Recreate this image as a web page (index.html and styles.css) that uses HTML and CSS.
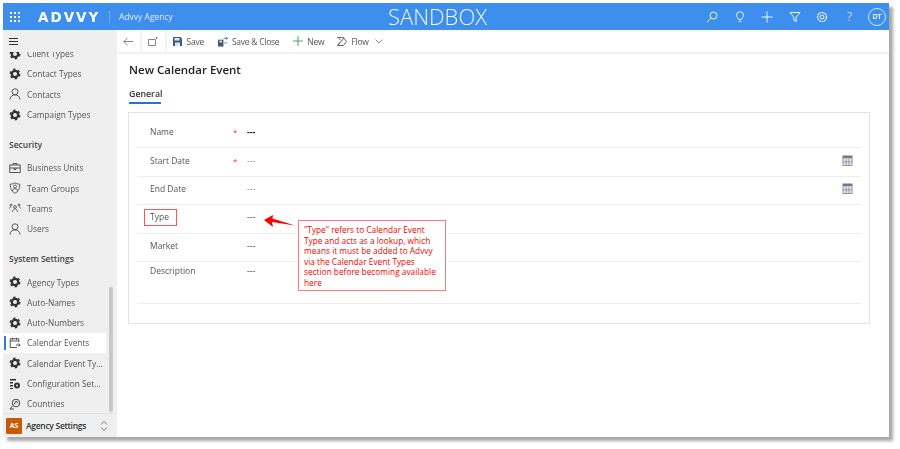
FILE: index.html
```html
<!DOCTYPE html>
<html lang="en">
<head>
<meta charset="utf-8">
<title>New Calendar Event</title>
<link rel="stylesheet" href="styles.css">
</head>
<body>
<svg class="defs" width="0" height="0" aria-hidden="true">
  <symbol id="gear" viewBox="0 0 12 12"><g fill="none" stroke="#333"><circle cx="6" cy="6" r="3.200" stroke-width="2.300"/><circle cx="6" cy="6" r="4.700" stroke-width="1.500" stroke-dasharray="2.400 2.520"/></g></symbol>
  <symbol id="person" viewBox="0 0 12 12"><g fill="none" stroke="#444" stroke-width=".9"><circle cx="6" cy="3.800" r="3"/><path d="M1 11.500c.3-3 2.300-4.700 5-4.700s4.700 1.700 5 4.700"/></g></symbol>
  <symbol id="cal" viewBox="0 0 12 12"><rect x="1" y="1" width="10" height="10.500" fill="#dfe6f2" stroke="#85858c" stroke-width=".9"/><rect x="1" y="1" width="10" height="2.500" fill="#77777f"/><path fill="none" stroke="#85858c" stroke-width=".8" d="M4.500 4v7M7.500 4v7M1 7.500h10"/></symbol>
</svg>
<div class="window">
  <header class="topbar">
    <svg class="waffle" width="10" height="10" viewBox="0 0 10 10"><g fill="#fff"><rect x="0" y="0" width="2" height="2"/><rect x="4" y="0" width="2" height="2"/><rect x="8" y="0" width="2" height="2"/><rect x="0" y="4" width="2" height="2"/><rect x="4" y="4" width="2" height="2"/><rect x="8" y="4" width="2" height="2"/><rect x="0" y="8" width="2" height="2"/><rect x="4" y="8" width="2" height="2"/><rect x="8" y="8" width="2" height="2"/></g></svg>
    <span class="logo">ADVVY</span>
    <span class="agency">Advvy Agency</span>
    <span class="sandbox">SANDBOX</span>
    <div class="top-icons">
      <svg width="12" height="12" viewBox="0 0 12 12"><g fill="none" stroke="#fff" stroke-width=".9"><circle cx="7.500" cy="4.500" r="3.500"/><path d="M5 7 1 11"/></g></svg>
      <svg width="12" height="12" viewBox="0 0 12 12"><g fill="none" stroke="#fff" stroke-width=".9"><path d="M4.500 8.500C4.300 7 2.500 6.300 2.500 4.200a3.500 3.500 0 0 1 7 0c0 2.100-1.800 2.800-2 4.300z"/><path d="M4.800 10.500h2.400"/></g></svg>
      <svg width="12" height="12" viewBox="0 0 12 12"><path fill="none" stroke="#fff" stroke-width=".9" d="M6 .5v11M.5 6h11"/></svg>
      <svg width="12" height="12" viewBox="0 0 12 12"><path fill="none" stroke="#fff" stroke-width=".9" d="M1 1.500h10L7.200 6.200v4.300L4.800 9V6.200z"/></svg>
      <svg width="12" height="12" viewBox="0 0 12 12"><g fill="none" stroke="#fff"><circle cx="6" cy="6" r="4.500" stroke-width="1.200" stroke-dasharray="2 .6"/><circle cx="6" cy="6" r="2" stroke-width=".9"/></g></svg>
      <span class="help">?</span>
      <span class="avatar">DT</span>
    </div>
  </header>
  <div class="body">
    <nav class="sidebar">
      <div class="burger"><svg width="9" height="7" viewBox="0 0 9 7"><path stroke="#333" stroke-width="1" d="M0 .5h9M0 3.500h9M0 6.500h9"/></svg></div>
      <div class="nav-scroll">
        <div class="nav-list">
          <a class="nav-item"><svg class="ni"><use href="#gear"/></svg>Client Types</a>
          <a class="nav-item"><svg class="ni"><use href="#gear"/></svg>Contact Types</a>
          <a class="nav-item"><svg class="ni"><use href="#person"/></svg>Contacts</a>
          <a class="nav-item"><svg class="ni"><use href="#gear"/></svg>Campaign Types</a>
          <div class="nav-head">Security</div>
          <a class="nav-item"><svg class="ni" viewBox="0 0 12 12"><g fill="none" stroke="#444" stroke-width=".9"><rect x=".8" y="3" width="10.400" height="7.500"/><path d="M4 3V1.500h4V3M.8 6h10.400M5 6v1.500h2V6"/></g></svg>Business Units</a>
          <a class="nav-item"><svg class="ni" viewBox="0 0 12 12"><g fill="none" stroke="#444" stroke-width=".8"><path d="M6 .8c1.500 1 3 1.300 4.800 1.300 0 4.700-1.500 7.600-4.800 9.200C2.700 9.700 1.200 6.800 1.200 2.100 3 2.100 4.500 1.800 6 .8z"/><circle cx="6" cy="4.500" r="1.500"/><path d="M3.500 9c.2-1.600 1.200-2.500 2.500-2.500S8.300 7.400 8.500 9"/></g></svg>Team Groups</a>
          <a class="nav-item"><svg class="ni" viewBox="0 0 12 12"><g fill="none" stroke="#444" stroke-width=".8"><circle cx="6" cy="5" r="1.400"/><circle cx="2" cy="3" r="1"/><circle cx="10" cy="3" r="1"/><path d="M3.500 10c.2-2 1.200-3.200 2.500-3.200S8.300 8 8.500 10M.5 6.500C.8 5.300 1.300 4.800 2 4.800M11.500 6.500c-.3-1.200-.8-1.700-1.500-1.700"/></g></svg>Teams</a>
          <a class="nav-item"><svg class="ni"><use href="#person"/></svg>Users</a>
          <div class="nav-head">System Settings</div>
          <a class="nav-item"><svg class="ni"><use href="#gear"/></svg>Agency Types</a>
          <a class="nav-item"><svg class="ni"><use href="#gear"/></svg>Auto-Names</a>
          <a class="nav-item"><svg class="ni"><use href="#gear"/></svg>Auto-Numbers</a>
          <a class="nav-item active"><svg class="ni" viewBox="0 0 12 12"><g fill="none" stroke="#444" stroke-width=".9"><path d="M8 10.500H1.200V1.800h8.600V5M1.200 4h8.600M3.500 .8v2M7.500 .8v2"/><path d="M7 8h4M9.500 6.300 11.200 8 9.500 9.700"/></g></svg>Calendar Events</a>
          <a class="nav-item"><svg class="ni"><use href="#gear"/></svg>Calendar Event Ty...</a>
          <a class="nav-item"><svg class="ni" viewBox="0 0 12 12"><g fill="#333"><path d="M1 1h6v1.500H1zM1 4h3v1.500H1zM1 7h3v1.500H1zM1 10h3v1H1z"/><circle cx="8" cy="7.500" r="3"/></g><circle cx="8" cy="7.500" r="1" fill="#eee"/></svg>Configuration Set...</a>
          <a class="nav-item"><svg class="ni" viewBox="0 0 12 12"><g fill="none" stroke="#333" stroke-width=".9"><circle cx="7" cy="5" r="3.800"/><path d="M5 6.500 7 3l2 2.500M3.500 8 1 11h4"/></g></svg>Countries</a>
        </div>
        <div class="scrollbar"></div>
      </div>
      <div class="area">
        <span class="area-badge">AS</span>
        <span class="area-name">Agency Settings</span>
        <svg width="8" height="12" viewBox="0 0 8 12"><path fill="none" stroke="#555" stroke-width=".8" d="M1 4.500 4 1.500l3 3M1 7.500l3 3 3-3"/></svg>
      </div>
    </nav>
    <main class="content">
      <div class="toolbar">
        <button class="tb tb-nav"><svg width="10" height="9" viewBox="0 0 10 9"><path fill="none" stroke="#666" stroke-width=".8" d="M10 4.500H.8M4.500.8.800 4.500l3.700 3.700"/></svg></button>
        <button class="tb tb-nav tb-win"><svg width="10" height="9" viewBox="0 0 10 9"><path fill="none" stroke="#666" stroke-width=".8" d="M7.500 2.500H.5v6h7zM8.500 0v2M8 .5l1.500 0"/></svg></button>
        <button class="tb tb-save"><svg width="9" height="9" viewBox="0 0 9 9"><path fill="#3c5a7d" d="M0 0h7.500L9 1.500V9H0z"/><path fill="#dfe6ee" d="M1.500 1h5v2.500h-5zM2 5.500h5V9H2z"/></svg>Save</button>
        <button class="tb tb-sc"><svg width="10" height="11" viewBox="0 0 11 11"><path fill="#44566b" d="M0 3.500h6V11H0z"/><path fill="#dfe6ee" d="M1.500 4.500h3v2h-3z"/><path fill="none" stroke="#3b7cc9" stroke-width="1" d="M6 2h4.500M8.500.5l2 1.500-2 1.500M10 7H7"/></svg>Save &amp; Close</button>
        <button class="tb tb-new"><svg width="10" height="10" viewBox="0 0 10 10"><path fill="none" stroke="#3a9a52" stroke-width=".9" d="M5 0v10M0 5h10"/></svg>New</button>
        <button class="tb tb-flow"><svg width="10" height="9" viewBox="0 0 10 9"><path fill="none" stroke="#444" stroke-width=".8" d="M.5.500h6L9.500 4.500 6.500 8.500H.5L7 1M.5 8.500 3 5.500M1 .5l3 3"/></svg>Flow</button>
        <svg class="chev" width="8" height="5" viewBox="0 0 8 5"><path fill="none" stroke="#777" stroke-width=".8" d="M.5.500 4 4 7.500.5"/></svg>
      </div>
      <h1 class="title">New Calendar Event</h1>
      <div class="tabs"><span class="tab">General</span></div>
      <section class="card">
        <div class="row row-name"><span class="label">Name</span><span class="req">*</span><span class="val strong">---</span></div>
        <div class="row row-start"><span class="label">Start Date</span><span class="req">*</span><span class="val muted">---</span><svg class="calicon"><use href="#cal"/></svg></div>
        <div class="row row-end"><span class="label">End Date</span><span class="req"></span><span class="val muted">---</span><svg class="calicon"><use href="#cal"/></svg></div>
        <div class="row row-type"><span class="label">Type</span><span class="req"></span><span class="val">---</span></div>
        <div class="row row-market"><span class="label">Market</span><span class="req"></span><span class="val">---</span></div>
        <div class="row row-desc"><span class="label">Description</span><span class="req"></span><span class="val">---</span></div>
        <div class="type-box"></div>
        <svg class="arrow" width="34" height="14" viewBox="0 0 34 14"><path fill="#f00" d="M1 5 10 0 9.500 3.500 32 10.500 9 7 10 12z"/></svg>
        <div class="note">"Type" refers to Calendar Event Type and acts as a lookup, which means it must be added to Advvy via the Calendar Event Types section before becoming available here</div>
      </section>
    </main>
  </div>
</div>
</body>
</html>
```
FILE: styles.css
```css
* { box-sizing: border-box; }
html, body { margin: 0; height: 100%; background: #fff; overflow: hidden; }
body { font-family: "Open Sans", "Noto Sans", "Liberation Sans", sans-serif; font-size: 8.5px; color: #444; }
.defs { position: absolute; }

.window {
  width: 886px; height: 434px; margin: 3px 0 0 3px;
  display: flex; flex-direction: column;
  background: #fff;
  box-shadow: 4px 4px 3px #a8a8a8;
  filter: blur(.3px);
}

.topbar {
  height: 27px; flex: none; display: flex; align-items: center;
  background: #3e8eed; color: #fff; position: relative;
}
.waffle { margin-left: 7px; flex: none; }
.logo {
  margin-left: 18px; width: 72px; height: 12px;
  font: 700 13.5px/12px "DejaVu Sans", sans-serif;
  letter-spacing: 2px; border-right: 1px solid #76aef2;
}
.agency { margin-left: 9px; font-size: 8.5px; color: #e4f0fd; }
.sandbox {
  position: absolute; left: 385px; top: 0; line-height: 27px;
  font-size: 22px; font-weight: 300; color: #f4f8fe;
}
.top-icons { margin-left: auto; display: flex; align-items: center; gap: 15.500px; padding-right: 3px; }
.top-icons svg { flex: none; }
.help { width: 12px; text-align: center; font-size: 12px; line-height: 12px; font-weight: 300; }
.avatar {
  width: 18px; height: 18px; border: 1px solid #d5e6fb; border-radius: 50%;
  font-size: 7px; font-weight: 600; line-height: 16px; text-align: center; margin-left: -3px;
}

.body { flex: 1; min-height: 0; display: flex; }

.sidebar { width: 114px; flex: none; display: flex; flex-direction: column; background: #efefef; }
.burger { height: 22px; flex: none; display: flex; align-items: center; padding: 1px 0 0 6px; }
.nav-scroll { flex: 1; min-height: 0; overflow: hidden; position: relative; }
.nav-list { margin-top: -8.500px; width: 103px; }
.nav-item {
  height: 20.300px; display: flex; align-items: center; padding-left: 6px;
  font-size: 8.300px; color: #555; white-space: nowrap; position: relative;
}
.ni { width: 12px; height: 12px; margin-right: 6px; flex: none; }
.nav-head { height: 33px; padding: 13.500px 0 0 6px; font-size: 8.500px; font-weight: 600; line-height: 14px; color: #444; }
.nav-item.active { background: #fff; }
.nav-item.active::before {
  content: ""; position: absolute; left: 1px; top: 3px; width: 2px; height: 14px; background: #2b7de0;
}
.scrollbar { position: absolute; left: 106px; top: 235px; width: 4px; height: 125px; background: #c8c8c8; border-radius: 2px; }
.area {
  height: 24px; flex: none; display: flex; align-items: center; padding-left: 3px;
  border-top: 1px solid #e2e2e2;
}
.area-badge {
  width: 16px; height: 16px; background: #c85a06; color: #fff; border-radius: 1px;
  font-size: 7px; font-weight: 700; line-height: 16px; text-align: center; flex: none;
}
.area-name { margin-left: 4px; width: 74px; font-size: 8.500px; letter-spacing: -.3px; font-weight: 600; color: #333; }

.content { flex: 1; min-width: 0; display: flex; flex-direction: column; }
.toolbar {
  height: 24px; flex: none; display: flex; align-items: center;
  border-bottom: 2px solid #f1f1f1;
}
.tb {
  height: 22px; border: 0; background: none; padding: 0; display: flex; align-items: center; gap: 4px;
  font: 8.500px "Open Sans", "Noto Sans", sans-serif; letter-spacing: -.25px; color: #555;
}
.tb-nav { width: 24.500px; justify-content: center; border-right: 2px solid #f3f3f3; }
.tb-win { width: 25px; }
.tb-save { margin-left: 6px; gap: 5px; }
.tb-sc { margin-left: 14px; }
.tb-new { margin-left: 14px; }
.tb-flow { margin-left: 13px; }
.chev { margin-left: 6px; }

.title { margin: 8px 0 0 12px; font-size: 11.500px; font-weight: 600; line-height: 16px; color: #222; }
.tabs { margin: 10px 0 0 12px; height: 16px; }
.tab {
  display: block; height: 16px; font-size: 8.800px; font-weight: 600; line-height: 13px; color: #333;
  border-bottom: 2px solid #2b6fd0; width: 32px;
}
.card {
  position: relative; margin: 8px 0 0 11px; width: 742px; height: 212px;
  border: 1px solid #e4e4e4; padding: 0 8px;
}
.row { display: flex; border-bottom: 1.500px solid #ededed; padding-left: 13px; align-items: flex-start; font-size: 8.500px; }
.row-name { height: 35px; padding-top: 12.500px; }
.row-start { height: 28.500px; padding-top: 7px; }
.row-end { height: 28.500px; padding-top: 6.500px; }
.row-type { height: 28.500px; padding-top: 6px; }
.row-market { height: 28.500px; padding-top: 6px; }
.row-desc { height: 42px; padding-top: 3px; }
.label { width: 83px; line-height: 12px; color: #555; }
.req { width: 14px; color: #e33; line-height: 12px; font-size: 8px; }
.val { line-height: 12px; color: #333; flex: 1; }
.val.strong { font-weight: 700; color: #111; }
.val.muted { color: #888; }
.calicon { width: 11px; height: 11px; margin-right: 8px; }

.type-box { position: absolute; left: 15px; top: 96px; width: 33px; height: 17px; border: 1px solid #f55; }
.arrow { position: absolute; left: 134px; top: 102px; }
.note {
  position: absolute; left: 169px; top: 107px; width: 148px; height: 71px;
  border: 1px solid #f77; background: #fff; color: #f00200;
  padding: 4px 5px; font-size: 8.300px; line-height: 10.600px;
}
```
